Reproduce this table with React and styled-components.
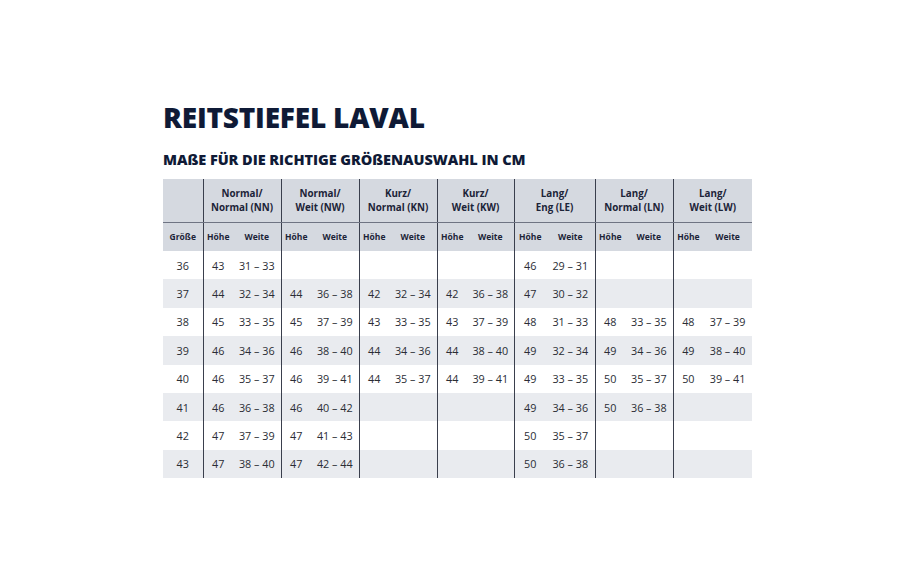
import styled, { createGlobalStyle } from "styled-components";

const GlobalStyle = createGlobalStyle`
    body {
        margin: 0;
        background: #fff;
        font-family: "Open Sans", "Liberation Sans", sans-serif;
    }
`

const Page = styled.div`
    width: 918px;
    height: 588px;
    box-sizing: border-box;
    padding: 98px 0 0 163px;
`

const Title = styled.h1`
    margin: 0;
    font-family: "Open Sans", sans-serif;
    font-weight: 800;
    font-size: 28px;
    line-height: 38px;
    color: #0f1a36;
    letter-spacing: -0.2px;
`

const Subtitle = styled.h2`
    margin: 14px 0 0 0;
    font-family: "Open Sans", sans-serif;
    font-weight: 800;
    font-size: 14.5px;
    line-height: 20px;
    color: #0f1a36;
    letter-spacing: -0.05px;
`

const Table = styled.table`
    margin-top: 9px;
    border-collapse: collapse;
    table-layout: fixed;
    width: 589px;
    font-family: "Open Sans", sans-serif;
`

const HeadCell = styled.th`
    background: #d5d9e0;
    color: #1c2438;
    font-weight: 700;
    line-height: 13.5px;
    padding: 0;
    text-align: center;
    height: ${props => props.tall ? "43px" : "28px"};
    border-left: ${props => props.divider ? "1.5px solid #3a3f4d" : "none"};
    border-bottom: ${props => props.tall ? "1px solid #6f7483" : "none"};
    font-size: ${props => props.small ? "8.5px" : "9.8px"};
`

const Row = styled.tr`
    background: ${props => props.striped ? "#e9ebef" : "#fff"};
`

const Cell = styled.td`
    padding: 0;
    height: 28.4px;
    text-align: center;
    font-size: 10.8px;
    color: #2a2d34;
    border-left: ${props => props.divider ? "1.5px solid #3a3f4d" : "none"};
`

const groups = [
    ["Normal/", "Normal (NN)"],
    ["Normal/", "Weit (NW)"],
    ["Kurz/", "Normal (KN)"],
    ["Kurz/", "Weit (KW)"],
    ["Lang/", "Eng (LE)"],
    ["Lang/", "Normal (LN)"],
    ["Lang/", "Weit (LW)"],
]

const widths = [[30, 48], [30, 48], [30, 48], [30, 47], [32, 49], [30, 48], [30, 49]]

// size, then pairs per group (null = leer)
const rows = [
    ["36", ["43", "31 – 33"], null, null, null, ["46", "29 – 31"], null, null],
    ["37", ["44", "32 – 34"], ["44", "36 – 38"], ["42", "32 – 34"], ["42", "36 – 38"], ["47", "30 – 32"], null, null],
    ["38", ["45", "33 – 35"], ["45", "37 – 39"], ["43", "33 – 35"], ["43", "37 – 39"], ["48", "31 – 33"], ["48", "33 – 35"], ["48", "37 – 39"]],
    ["39", ["46", "34 – 36"], ["46", "38 – 40"], ["44", "34 – 36"], ["44", "38 – 40"], ["49", "32 – 34"], ["49", "34 – 36"], ["49", "38 – 40"]],
    ["40", ["46", "35 – 37"], ["46", "39 – 41"], ["44", "35 – 37"], ["44", "39 – 41"], ["49", "33 – 35"], ["50", "35 – 37"], ["50", "39 – 41"]],
    ["41", ["46", "36 – 38"], ["46", "40 – 42"], null, null, ["49", "34 – 36"], ["50", "36 – 38"], null],
    ["42", ["47", "37 – 39"], ["47", "41 – 43"], null, null, ["50", "35 – 37"], null, null],
    ["43", ["47", "38 – 40"], ["47", "42 – 44"], null, null, ["50", "36 – 38"], null, null],
]

const App = () => {
    return (
        <>
            <GlobalStyle />
            <Page>
                <Title>REITSTIEFEL LAVAL</Title>
                <Subtitle>MAßE FÜR DIE RICHTIGE GRÖßENAUSWAHL IN CM</Subtitle>
                <Table>
                    <colgroup>
                        <col style={{ width: 40 }} />
                        {widths.flat().map((w, i) => <col key={i} style={{ width: w }} />)}
                    </colgroup>
                    <thead>
                        <tr>
                            <HeadCell tall></HeadCell>
                            {groups.map((g, i) => (
                                <HeadCell tall divider colSpan={2} key={i}>
                                    {g[0]}<br />{g[1]}
                                </HeadCell>
                            ))}
                        </tr>
                        <tr>
                            <HeadCell small>Größe</HeadCell>
                            {groups.map((g, i) => [
                                <HeadCell small divider key={"h" + i}>Höhe</HeadCell>,
                                <HeadCell small key={"w" + i}>Weite</HeadCell>,
                            ])}
                        </tr>
                    </thead>
                    <tbody>
                        {rows.map((r, i) => (
                            <Row striped={i % 2 === 1} key={r[0]}>
                                <Cell>{r[0]}</Cell>
                                {r.slice(1).map((pair, j) => [
                                    <Cell divider key={"a" + j}>{pair ? pair[0] : ""}</Cell>,
                                    <Cell key={"b" + j}>{pair ? pair[1] : ""}</Cell>,
                                ])}
                            </Row>
                        ))}
                    </tbody>
                </Table>
            </Page>
        </>
    )
}

export default App;
